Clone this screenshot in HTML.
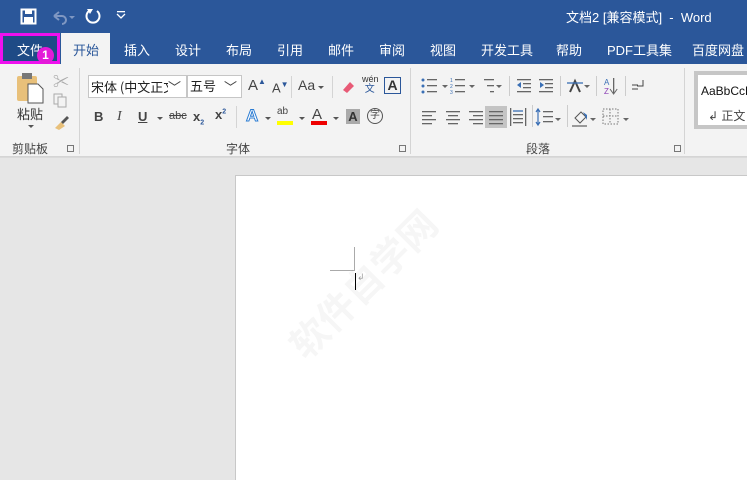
<!DOCTYPE html>
<html><head><meta charset="utf-8"><style>
*{margin:0;padding:0;box-sizing:border-box}
html,body{width:747px;height:480px;overflow:hidden}
body{background:#e6e6e6;font-family:"Liberation Sans","Noto Sans CJK SC",sans-serif;position:relative}
.a{position:absolute}
.t{color:#fff;font-size:13px;top:40px}
.g{color:#444;font-size:12px}
.ic{position:absolute;font-size:13px;color:#444}
.sep{position:absolute;width:1px;background:#d4d4d4}
.dd{position:absolute;width:0;height:0;border-left:3px solid transparent;border-right:3px solid transparent;border-top:3px solid #555}
</style></head><body>
<div class="a" style="left:0;top:0;width:747px;height:64px;background:#2b579a"></div>
<svg class="a" style="left:20px;top:8px" width="18" height="18"><rect x="1.5" y="1.5" width="14" height="14" fill="none" stroke="#fff" stroke-width="2"/><rect x="5" y="2" width="7" height="4" fill="#fff"/><rect x="4" y="9" width="9" height="6" fill="#fff"/></svg>
<svg class="a" style="left:50px;top:8px" width="26" height="18"><path d="M4 8 L9 4 M4 8 L9 12 M4 8 H12 A4 4 0 0 1 12 16" fill="none" stroke="#7f97c2" stroke-width="2"/><path d="M19 8 l3 3 l3 -3z" fill="#7f97c2"/></svg>
<svg class="a" style="left:84px;top:7px" width="18" height="18"><path d="M5 4 A6.5 6.5 0 1 0 13 4" fill="none" stroke="#fff" stroke-width="2"/><path d="M3 2 L9 2 L6 7z" fill="#fff"/></svg>
<svg class="a" style="left:116px;top:10px" width="12" height="10"><rect x="1" y="1" width="8" height="1.3" fill="#fff"/><path d="M1 4 l4 4 l4 -4" fill="none" stroke="#fff" stroke-width="1.3"/></svg>
<div class="a" style="left:566px;top:7px;color:#fff;font-size:13px">文档2 [兼容模式]&nbsp; -&nbsp; Word</div>
<div class="a" style="left:0;top:33px;width:60px;height:31px;background:#1e4b86;border:3px solid #ee10ee"></div>
<div class="a t" style="left:17px">文件</div>
<div class="a" style="left:37px;top:47px;width:17px;height:17px;border-radius:50%;background:#e31ad8;color:#fff;font-size:12px;font-weight:bold;text-align:center;line-height:17px">1</div>
<div class="a" style="left:61px;top:33px;width:49px;height:31px;background:#f3f3f3"></div>
<div class="a t" style="left:73px;color:#2b579a">开始</div>
<div class="a t" style="left:124px">插入</div>
<div class="a t" style="left:175px">设计</div>
<div class="a t" style="left:226px">布局</div>
<div class="a t" style="left:277px">引用</div>
<div class="a t" style="left:328px">邮件</div>
<div class="a t" style="left:379px">审阅</div>
<div class="a t" style="left:430px">视图</div>
<div class="a t" style="left:481px">开发工具</div>
<div class="a t" style="left:556px">帮助</div>
<div class="a t" style="left:607px">PDF工具集</div>
<div class="a t" style="left:692px">百度网盘</div>
<div class="a" style="left:0;top:64px;width:747px;height:93px;background:#f3f3f3;border-bottom:1px solid #d5d5d5"></div>
<div class="a" style="left:0;top:157px;width:747px;height:1px;background:#dadada"></div>
<svg class="a" style="left:16px;top:72px" width="30" height="32"><rect x="1" y="4" width="20" height="25" rx="2" fill="#e8c07a"/><rect x="6" y="1" width="10" height="6" fill="#777"/><path d="M12 12 h10 l5 5 v14 h-15z" fill="#fff" stroke="#555"/></svg>
<div class="a g" style="left:17px;top:104px;font-size:13px;color:#333">粘贴</div>
<div class="dd" style="left:28px;top:125px"></div>
<div class="ic" style="left:53px;top:68px;color:#aaa;font-size:16px">✂</div>
<svg class="a" style="left:53px;top:93px" width="15" height="15"><rect x="1" y="1" width="8" height="10" fill="none" stroke="#aaa"/><rect x="5" y="4" width="8" height="10" fill="#f3f3f3" stroke="#aaa"/></svg>
<svg class="a" style="left:53px;top:114px" width="16" height="16"><path d="M2 14 l6 -6 l4 4 l-6 4z" fill="#e8c07a"/><path d="M8 8 l6 -6 l2 2 l-6 6z" fill="#555"/></svg>
<div class="a g" style="left:12px;top:140px">剪贴板</div>
<div class="a" style="left:67px;top:145px;width:7px;height:7px;border:1px solid #777"></div>
<div class="sep" style="left:79px;top:68px;height:86px"></div>
<div class="a" style="left:88px;top:75px;width:99px;height:23px;background:#fff;border:1px solid #c6c6c6;font-size:13px;padding:2px 2px;color:#222;font-family:'Noto Sans CJK SC',sans-serif;line-height:17px;white-space:nowrap;overflow:hidden">宋体 (中文正文</div>
<div class="a" style="left:168px;top:77px;width:18px;height:19px;background:#fff;font-size:13px;color:#444">﹀</div>
<div class="a" style="left:187px;top:75px;width:55px;height:23px;background:#fff;border:1px solid #c6c6c6;font-size:13px;padding:2px 2px;color:#222;line-height:17px">五号</div>
<div class="a" style="left:224px;top:77px;font-size:13px;color:#444">﹀</div>
<div class="ic" style="left:248px;top:77px;font-size:15px">A<sup style="font-size:8px;color:#2b579a">▲</sup></div>
<div class="ic" style="left:272px;top:80px;font-size:13px">A<sup style="font-size:8px;color:#2b579a">▼</sup></div>
<div class="sep" style="left:291px;top:76px;height:22px"></div>
<div class="ic" style="left:298px;top:77px;font-size:14px">Aa</div><div class="dd" style="left:318px;top:86px"></div>
<div class="sep" style="left:332px;top:76px;height:22px"></div>
<svg class="a" style="left:340px;top:78px" width="16" height="16"><path d="M3 12 l7 -8 l4 4 l-7 7z" fill="#e85a76"/></svg>
<div class="ic" style="left:362px;top:74px;font-size:9px;line-height:10px;color:#333">wén<br><span style="color:#2b579a;font-size:10px">&nbsp;文</span></div>
<div class="a" style="left:384px;top:77px;width:17px;height:17px;border:1px solid #2b579a;font-size:14px;font-weight:bold;text-align:center;line-height:15px;color:#333">A</div>
<div class="ic" style="left:94px;top:109px;font-weight:bold;font-size:13px">B</div>
<div class="ic" style="left:117px;top:109px;font-style:italic;font-family:'Liberation Serif';font-size:14px">I</div>
<div class="ic" style="left:138px;top:109px;text-decoration:underline;font-weight:bold">U</div><div class="dd" style="left:157px;top:117px"></div>
<div class="ic" style="left:169px;top:110px;text-decoration:line-through;font-size:11px">abc</div>
<div class="ic" style="left:193px;top:109px;font-weight:bold">x<sub style="font-size:7px;color:#2b579a">2</sub></div>
<div class="ic" style="left:215px;top:107px;font-weight:bold">x<sup style="font-size:7px;color:#2b579a">2</sup></div>
<div class="sep" style="left:236px;top:106px;height:22px"></div>
<div class="ic" style="left:246px;top:106px;font-size:17px;color:#fff;-webkit-text-stroke:1px #2b7cd3;font-weight:bold">A</div><div class="dd" style="left:265px;top:117px"></div>
<div class="ic" style="left:277px;top:106px;font-size:10px">ab</div><div class="a" style="left:277px;top:121px;width:16px;height:4px;background:#ffff00"></div><div class="dd" style="left:299px;top:117px"></div>
<div class="ic" style="left:312px;top:106px;font-size:15px">A</div><div class="a" style="left:311px;top:121px;width:16px;height:4px;background:#e00"></div><div class="dd" style="left:333px;top:117px"></div>
<div class="a" style="left:346px;top:109px;width:14px;height:15px;background:#aaa;font-size:13px;font-weight:bold;text-align:center;line-height:15px;color:#333">A</div>
<div class="a" style="left:367px;top:108px;width:16px;height:16px;border:1px solid #555;border-radius:50%;font-size:10px;text-align:center;line-height:14px;color:#444">字</div>
<div class="a g" style="left:226px;top:140px">字体</div>
<div class="a" style="left:399px;top:145px;width:7px;height:7px;border:1px solid #777"></div>
<div class="sep" style="left:410px;top:68px;height:86px"></div>
<svg class="a" style="left:420px;top:75px" width="270" height="55" fill="#666">
<g fill="#3a6fb5"><circle cx="3" cy="5" r="1.5"/><circle cx="3" cy="11" r="1.5"/><circle cx="3" cy="17" r="1.5"/></g>
<rect x="7" y="4" width="10" height="1.3"/><rect x="7" y="10" width="10" height="1.3"/><rect x="7" y="16" width="10" height="1.3"/>
<path d="M22 10 h6 l-3 3z"/>
<g fill="#3a6fb5" font-size="5" font-family="Liberation Sans"><text x="30" y="7">1</text><text x="30" y="13">2</text><text x="30" y="19">3</text></g>
<rect x="35" y="4" width="10" height="1.3"/><rect x="35" y="10" width="10" height="1.3"/><rect x="35" y="16" width="10" height="1.3"/>
<path d="M49 10 h6 l-3 3z"/>
<rect x="64" y="4" width="10" height="1.3"/><rect x="67" y="10" width="7" height="1.3"/><rect x="70" y="16" width="4" height="1.3"/>
<path d="M76 10 h6 l-3 3z"/>
<rect x="89" y="1" width="1" height="20" fill="#ccc"/>
<rect x="97" y="4" width="14" height="1.3"/><rect x="103" y="8" width="8" height="1.3"/><rect x="103" y="12" width="8" height="1.3"/><rect x="97" y="16" width="14" height="1.3"/><path d="M97 10 l4 -3 v6z" fill="#3a6fb5"/>
<rect x="119" y="4" width="14" height="1.3"/><rect x="125" y="8" width="8" height="1.3"/><rect x="125" y="12" width="8" height="1.3"/><rect x="119" y="16" width="14" height="1.3"/><path d="M124 10 l-4 -3 v6z" fill="#3a6fb5"/>
<rect x="140" y="1" width="1" height="20" fill="#ccc"/>
<path d="M150 17 l5 -11 l5 11" fill="none" stroke="#444" stroke-width="2"/><path d="M147 8 h16" stroke="#3a6fb5" stroke-width="1.3"/>
<path d="M164 10 h6 l-3 3z"/>
<rect x="176" y="1" width="1" height="20" fill="#ccc"/>
<text x="184" y="10" font-size="8" fill="#3a6fb5" font-family="Liberation Sans">A</text><text x="184" y="19" font-size="8" fill="#8b3fb5" font-family="Liberation Sans">Z</text><rect x="193" y="3" width="1.3" height="15"/><path d="M190 14 l3.6 5 l3.6 -5" fill="none" stroke="#666"/>
<rect x="205" y="1" width="1" height="20" fill="#ccc"/>
<path d="M223 5 v6 h-6" fill="none" stroke="#444"/><path d="M212 10 h6 M212 14 h6" stroke="#444"/>
<g transform="translate(0,33)"><rect x="2" y="3" width="14" height="1.3"/><rect x="2" y="7" width="10" height="1.3"/><rect x="2" y="11" width="14" height="1.3"/><rect x="2" y="15" width="10" height="1.3"/>
<rect x="26" y="3" width="14" height="1.3"/><rect x="28" y="7" width="10" height="1.3"/><rect x="26" y="11" width="14" height="1.3"/><rect x="28" y="15" width="10" height="1.3"/>
<rect x="49" y="3" width="14" height="1.3"/><rect x="53" y="7" width="10" height="1.3"/><rect x="49" y="11" width="14" height="1.3"/><rect x="53" y="15" width="10" height="1.3"/>
<rect x="65" y="-2" width="22" height="22" fill="#c4c4c4"/><rect x="69" y="3" width="14" height="1.3"/><rect x="69" y="7" width="14" height="1.3"/><rect x="69" y="11" width="14" height="1.3"/><rect x="69" y="15" width="14" height="1.3"/>
<rect x="90" y="0" width="1.3" height="18"/><rect x="105" y="0" width="1.3" height="18"/><rect x="93" y="6" width="10" height="1.3"/><rect x="93" y="10" width="10" height="1.3"/><rect x="93" y="14" width="10" height="1.3"/><path d="M93 3 h10" stroke="#3a6fb5" stroke-width="1.3"/>
<rect x="112" y="-3" width="1" height="22" fill="#ccc"/>
<rect x="123" y="3" width="10" height="1.3"/><rect x="123" y="8" width="10" height="1.3"/><rect x="123" y="13" width="10" height="1.3"/><path d="M118 1 v16 M116 4 l2 -3 l2 3 M116 14 l2 3 l2 -3" fill="none" stroke="#3a6fb5" stroke-width="1.2"/>
<path d="M135 10 h6 l-3 3z"/>
<rect x="147" y="-3" width="1" height="22" fill="#ccc"/>
<path d="M155 10 l6 -6 l5 5 l-6 6z" fill="none" stroke="#555"/><path d="M163 4 l4 3 v5z" fill="#3a6fb5"/><rect x="152" y="17" width="15" height="2" fill="#999"/>
<path d="M170 10 h6 l-3 3z"/>
<rect x="183" y="1" width="15" height="15" fill="none" stroke="#777" stroke-dasharray="1.5 1.5"/><path d="M190 1 v15 M183 8 h15" stroke="#777" stroke-dasharray="1.5 1.5"/>
<path d="M203 10 h6 l-3 3z"/></g>
</svg>
<div class="a g" style="left:526px;top:140px">段落</div>
<div class="a" style="left:674px;top:145px;width:7px;height:7px;border:1px solid #777"></div>
<div class="sep" style="left:684px;top:68px;height:86px"></div>
<div class="a" style="left:694px;top:71px;width:60px;height:58px;background:#fff;border:4px solid #c6c6c6;overflow:hidden">
<div class="a" style="left:3px;top:9px;font-size:12px;color:#111;white-space:nowrap">AaBbCcD</div>
<div class="a" style="left:10px;top:32px;font-size:12px;color:#444;white-space:nowrap">↲ 正文</div>
</div>
<div class="a" style="left:235px;top:175px;width:520px;height:320px;background:#fff;border:1px solid #c8c8c8"></div>
<div class="a" style="left:330px;top:270px;width:24px;height:1px;background:#aaa"></div>
<div class="a" style="left:354px;top:247px;width:1px;height:24px;background:#aaa"></div>
<div class="a" style="left:355px;top:273px;width:1px;height:17px;background:#000"></div>
<div class="a" style="left:357px;top:272px;font-size:9px;color:#999">↲</div>
<div class="a" style="transform:rotate(-45deg);transform-origin:left top;font-size:38px;color:rgba(0,0,0,0.035);white-space:nowrap;top:330px;left:275px;font-weight:bold">软件自学网</div>
</body></html>
